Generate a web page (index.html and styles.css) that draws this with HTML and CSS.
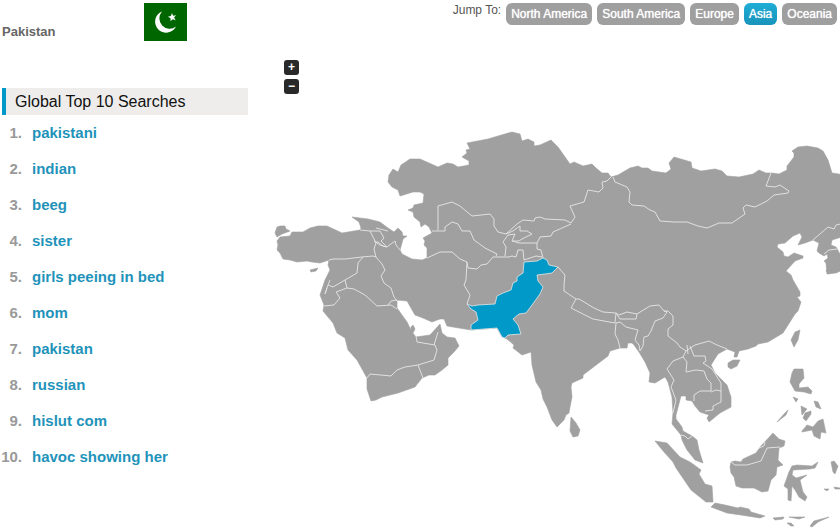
FILE: index.html
```html
<!DOCTYPE html>
<html lang="en">
<head>
<meta charset="UTF-8">
<meta name="viewport" content="width=device-width, initial-scale=1.0">
<title>Global Top 10 Searches</title>
<link rel="stylesheet" href="styles.css">
</head>
<body>
<div class="page">
	<div class="side">
		<div class="country">
			<span class="country-name">Pakistan</span>
			<svg class="flag" viewBox="0 0 43 38" role="img" aria-label="Flag of Pakistan">
				<rect width="43" height="38" fill="#006600"/>
				<path d="M18 8.500A11 11 0 1 0 32 23.500A10.300 10.300 0 0 1 18 8.500Z" fill="#fff"/>
				<path d="M28 10l1 2.800 3-.6-1.900 2.400 1.500 2.600-2.900-1-2.200 2 .1-3-2.700-1.500 3-.8z" fill="#fff"/>
			</svg>
		</div>
		<h2 class="title">Global Top 10 Searches</h2>
		<ol class="searches">
			<li><span class="num">1.</span><a href="#">pakistani</a></li>
			<li><span class="num">2.</span><a href="#">indian</a></li>
			<li><span class="num">3.</span><a href="#">beeg</a></li>
			<li><span class="num">4.</span><a href="#">sister</a></li>
			<li><span class="num">5.</span><a href="#">girls peeing in bed</a></li>
			<li><span class="num">6.</span><a href="#">mom</a></li>
			<li><span class="num">7.</span><a href="#">pakistan</a></li>
			<li><span class="num">8.</span><a href="#">russian</a></li>
			<li><span class="num">9.</span><a href="#">hislut com</a></li>
			<li><span class="num">10.</span><a href="#">havoc showing her</a></li>
		</ol>
	</div>
	<div class="main">
		<div class="jump">
			<span class="jump-label">Jump To:</span>
			<a class="btn" href="#">North America</a>
			<a class="btn" href="#">South America</a>
			<a class="btn" href="#">Europe</a>
			<a class="btn active" href="#">Asia</a>
			<a class="btn" href="#">Oceania</a>
		</div>
		<div class="map">
			<div class="zoom">
				<button type="button" aria-label="Zoom in">+</button>
				<button type="button" aria-label="Zoom out">−</button>
			</div>
			<svg class="asia" viewBox="248 50 592 480" role="img" aria-label="Map of Asia">
				<g class="land">
					<!-- mainland -->
					<path d="M277 241L280 237 290 236 292 232 303 232 310 228 318 226 327 226 342 233 360 230 361 228 359 222 352 217 368 219 380 222 388 228 394 232 398 228 402 232 403 236 407 236 403 239 402 243 400 250 402 254 412 259 422 260 427 258 427 248 424 245 425 241 423 238 432 233 429 227 425 224 421 227 420 222 414 217 413 212 408 210 413 208 414 205 423 203 424 194 420 192 413 192 400 196 398 190 392 187 388 182 389 175 393 169 398 172 401 165 410 159 420 159 438 167 447 163 453 164 458 167 469 165 469 161 462 157 467 153 466 150 470 149 467 143 488 139 498 136 512 132 520 134 522 141 528 139 534 142 534 146 540 145 551 140 558 147 570 164 574 162 583 166 592 164 596 168 602 173 608 173 611 177 618 175 630 168 638 166 642 168 648 168 652 171 666 173 671 169 669 163 674 157 691 162 692 168 701 171 715 169 722 171 727 176 739 177 753 174 759 170 766 173 772 173 779 174 787 170 787 166 794 157 794 153 792 151 798 147 807 146 818 148 823 151 828 160 832 173 845 175V236L832 240 831 245 836 247 840 254 845 262V269L836 273 827 274 826 263 824 261 828 258 827 254 824 256 819 253 817 251 819 243 813 240 805 243 798 245 802 237 800 233 793 236 785 243 778 244 777 247 783 252 784 256 788 257 794 253 803 256 803 258 795 261 786 271 791 275 793 280 800 292 800 296 797 297 801 302 798 311 795 314 783 333 768 342 758 344 756 346 748 349 739 351 737 357 734 357 735 352 727 349 718 354 711 365 715 373 727 385 731 397 731 407 720 413 709 422 707 418 709 415 700 412 695 406 692 401 686 400 686 396 681 396 676 415 676 419 682 427 683 431 692 436 697 440 699 450 703 463 695 460 687 450 682 440 681 435 672 424 673 413 672 397 668 382 665 377 655 383 649 382 650 373 645 362 639 352 634 345 632 343 628 343 627 348 620 348 610 351 608 356 583 375 583 378 572 383 571 387 572 397 570 407 569 413 566 415 564 420 557 427 552 420 547 407 543 399 541 390 536 382 532 365 531 352 522 355 513 348 514 345 507 339 502 337 497 328 471 330 447 326 444 319 440 319 432 322 423 318 415 315 407 301 397 300 397 308 402 315 407 322 412 332 416 337 430 335 440 324 442 333 447 337 455 338 459 346 454 352 448 358 448 365 442 370 435 375 429 375 422 378 415 387 398 393 382 397 376 400 371 401 367 389 367 378 357 360 348 350 345 338 337 333 333 323 323 311 324 305 320 295 325 280 330 270 328 265 329 260 320 263 312 262 307 261 297 262 290 260 283 259 280 253 277 250 278 245Z"/>
					<!-- Thrace, Cyprus, Bahrain -->
					<path d="M277 227L280 226 285 226 286 229 290 231 282 234 277 237 275 233Z"/>
					<path d="M310 270L318 268 316 271 311 272Z"/>
					<path d="M411 327L413 325 415 329 413 333 411 331Z"/>
					<!-- Sri Lanka, Hainan, Taiwan, Japan -->
					<path d="M571 417L576 423 580 430 578 436 573 437 570 431Z"/>
					<path d="M728 363L733 360 740 360 737 366 731 369 728 367Z"/>
					<path d="M800 330L798 340 794 347 791 340 795 332Z"/>
					<path d="M826 270L838 269 828 274Z"/>
					<!-- Philippines -->
					<path d="M794 369L803 369 804 378 799 384 799 388 808 387 812 391 811 394 804 392 795 391 790 382 792 373Z"/>
					<path d="M793 397L798 399 796 402Z"/>
					<path d="M801 406L807 409 802 415Z"/>
					<path d="M814 401L818 402 821 409 816 407Z"/>
					<path d="M805 413L811 411 811 414 806 421 803 418Z"/>
					<path d="M802 431L807 425 813 427 818 421 823 419 826 433 821 432 820 439 814 436 812 430 802 432Z"/>
					<path d="M777 422L784 414 788 410 786 415Z"/>
					<!-- Sumatra, Java, Lesser Sundas -->
					<path d="M655 441L667 443 680 457 690 462 701 470 699 474 705 484 712 486 713 502 706 502 691 490 676 468 673 462 664 452Z"/>
					<path d="M711 507L715 503 725 505 738 508 740 507 749 509 751 512 765 516 760 518 741 515 727 513Z"/>
					<path d="M773 518L784 517 783 519 775 520Z"/>
					<path d="M789 517L805 517 799 519Z"/>
					<path d="M787 523L791 523 794 526 791 526Z"/>
					<path d="M810 526L814 521 829 517 818 522 812 527Z"/>
					<!-- Borneo -->
					<path d="M731 462L735 461 741 462 743 459 756 453 761 446 773 433 779 439 785 441 784 446 779 448 778 460 783 465 777 467 776 475 771 480 768 491 762 492 754 488 742 488 736 486 734 477 731 473 730 467Z"/>
					<!-- Sulawesi, Moluccas -->
					<path d="M789 472L792 466 797 465 812 466 818 462 815 468 810 469 793 470 792 475 796 478 807 475 800 480 803 492 807 497 805 501 799 497 795 490 792 486 791 501 788 500 788 489 784 486Z"/>
					<path d="M831 462L834 461 838 466 835 474 833 472Z"/>
					<path d="M824 489H829L827 491Z"/>
					<path d="M834 487L840 488V489H835Z"/>
				</g>
				<path class="pakistan" d="M467 304L472 306 478 305 495 304 497 296 503 293 511 290 513 283 517 281 517 277 523 273 524 262 537 261 543 258 547 260 549 265 558 267 552 273 545 274 537 275 538 281 543 287 540 294 532 305 526 313 519 314 513 319 518 325 521 334 508 335 505 338 502 337 497 328 471 330 471 325 478 320 476 312 471 309Z"/>
				<g class="borders">
					<!-- Middle East -->
					<path d="M329 260L333 259 345 259 362 257 373 256 376 257 M363 257L358 263 357 273 345 280 333 287 328 285 330 280 M345 280L347 288 336 292 340 298 334 305 324 306 M347 288L354 289 365 295 377 306 391 305 397 309 M388 305L391 301 397 300 M376 257L382 264 385 270 381 276 384 283 391 288 394 297 397 301 M328 285L325 294 327 288"/>
					<path d="M360 230L370 231 374 239 376 243 374 249 376 257 M370 231L380 231 384 238 381 241 387 247 383 246 378 242 375 242 M387 247L395 241 396 245 400 250 M374 241L380 245 386 247 M376 228L388 231"/>
					<path d="M367 378L370 374 391 376 397 370 405 367 418 365 434 360 437 350 435 345 417 342 416 336 M434 345L438 332 M418 365L423 378"/>
					<!-- Central Asia -->
					<path d="M438 230V206L452 202 460 206 472 216 490 214 494 219 494 226 498 232 506 234 517 224 523 220 534 221 535 218 540 217 545 219 565 220 571 223 575 217 570 206 584 202 588 190 599 192 603 188 602 182 607 181 611 177"/>
					<path d="M432 231H445V227L452 222 458 224 462 231 470 231 474 240 485 248 497 254 496 256"/>
					<path d="M427 258L440 252 452 252 460 259 467 262 468 268 477 269 481 265 487 264 493 257 509 257 512 256 516 257 518 250 523 250 524 260 536 256 542 257"/>
					<path d="M506 234L513 231 520 226 520 231 527 231 532 234 522 239 519 241 512 241 515 234 508 235 503 242 506 247 505 256 M512 241L519 243 537 243 540 237 551 236 553 232 571 224 M537 243L537 249 541 250 543 258"/>
					<path d="M467 262L466 280 464 285 470 295 467 304"/>
					<!-- Mongolia -->
					<path d="M613 177L615 182 627 187 630 192 629 202 632 205 644 206 650 210 655 212 660 221 674 222 687 222 698 226 707 228 719 223 732 223 745 214 743 208 746 205 755 207 767 201 774 195 788 193 789 191 780 185 775 187 766 186 771 173"/>
					<!-- Korea -->
					<path d="M813 240L828 227 834 229 836 225 845 223 M824 254L829 250 837 249"/>
					<!-- Himalaya -->
					<path d="M558 267L565 275 564 285 564 291 576 299 571 308 593 319 615 323 616 313 603 312 594 308 579 299 576 299 M616 313L620 319 636 319 637 314 627 312 619 315 616 313 M616 323L620 322 626 327 638 330 635 340 639 345 640 351 M616 323L615 334 618 340 620 348 M637 314L650 306 659 305 664 311 668 311 673 316 673 325 668 329 668 336 677 343 680 347 686 351 695 345 709 341 717 345 727 349"/>
					<path d="M664 311L667 312 663 318 655 321 651 331 648 336 644 337 643 346 640 351"/>
					<!-- Indochina -->
					<path d="M686 351L683 357 673 361 667 369 674 380 671 387 676 400 673 413 M683 357L687 362 686 372 696 370 704 371 707 379 711 383 711 391 700 391 694 395 694 401 M690 346L694 356 705 356 706 361 703 363 712 369 721 383 721 391 716 390 711 392 M721 391L721 402 713 406 713 410 705 411 M681 435L685 436 688 439 692 436 M687 345L688 354"/>
					<path d="M731 462L735 465 747 465 761 461 767 448 780 447 M759 448L764 446 765 442"/>
				</g>
			</svg>
		</div>
	</div>
</div>
</body>
</html>
```
FILE: styles.css
```css
body,h2,ol{margin:0;padding:0;}
ol{list-style:none;}
a{text-decoration:none;}
body{background:#fff;font:12px/16px "Liberation Sans",Arial,sans-serif;color:#555;overflow:hidden;}
.page{display:flex;}
.side{width:246px;flex:none;padding:3px 0 0 2px;}
.country{display:flex;align-items:flex-start;height:85px;}
.country-name{width:142px;padding-top:21px;font-size:13px;font-weight:700;color:#666;}
.flag{width:43px;height:38px;}
.title{border-left:4px solid #0099c8;background:#eeedec;padding:0 9px;font-size:16px;font-weight:400;line-height:27px;color:#111;}
.searches li{display:flex;gap:10px;height:36px;font-size:15px;font-weight:700;line-height:36px;}
.searches .num{width:20px;display:flex;justify-content:flex-end;color:#999;}
.searches a{color:#1f93ba;}
.main{flex:1;min-width:0;}
.jump{display:flex;justify-content:flex-end;gap:5px;padding:3px 3px 0 0;height:47px;}
.jump-label{line-height:14px;}
.btn{height:22px;box-sizing:border-box;padding:0 5px;border-radius:6px;background:#9f9f9f;color:#fff;line-height:22px;text-shadow:0 0 1px #fff;}
.btn.active{background:linear-gradient(#1fadd6,#1893ba);}
.map{position:relative;}
.zoom{position:absolute;top:10px;left:36px;display:flex;flex-direction:column;gap:4px;}
.zoom button{width:15px;height:15px;padding:0;border:0;border-radius:3px;background:#292929;color:#fff;font:700 12px/15px "Liberation Sans",Arial,sans-serif;}
.asia{display:block;width:100%;}
.land{fill:#a0a0a0;stroke:#a0a0a0;stroke-width:.6;stroke-linejoin:round;}
.pakistan{fill:#0099c8;stroke:#e6e6e6;stroke-width:.8;}
.borders{fill:none;stroke:#e0e0e0;stroke-width:1;stroke-linejoin:round;}
```
